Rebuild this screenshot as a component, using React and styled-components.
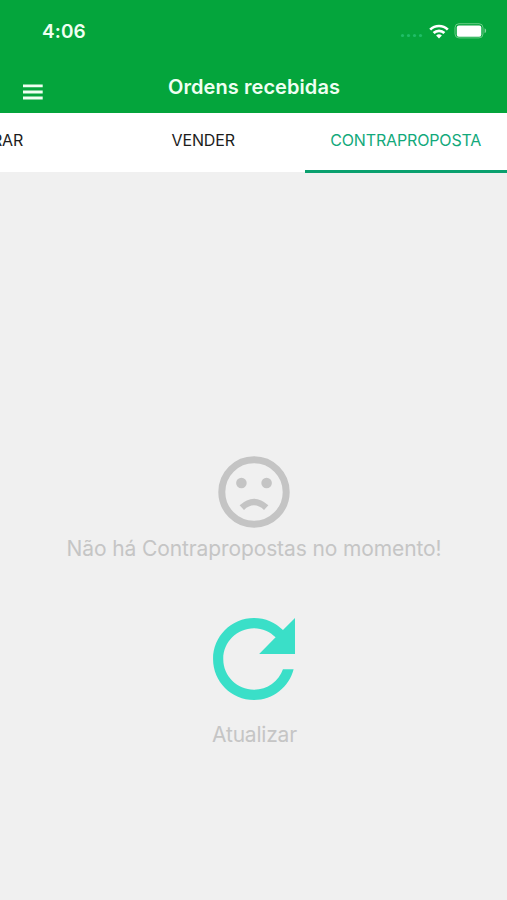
import React, { useState } from "react";
import styled, { createGlobalStyle } from "styled-components";

const GlobalStyle = createGlobalStyle`
  * {
    box-sizing: border-box;
  }
  body {
    margin: 0;
    background: #f0f0f0;
    font-family: Inter, "Liberation Sans", sans-serif;
  }
`;

const Screen = styled.div`
  width: 507px;
  height: 900px;
  display: flex;
  flex-direction: column;
  overflow: hidden;
  background: #f0f0f0;
`;

const Header = styled.header`
  height: 113px;
  flex-shrink: 0;
  background: #04a53c;
  color: #effff2;
`;

const StatusBar = styled.div`
  height: 62px;
  padding: 0 20px 0 42px;
  display: flex;
  align-items: center;
  justify-content: space-between;
`;

const Time = styled.span`
  font-size: 19px;
  font-weight: 600;
  letter-spacing: 0.1px;
`;

const StatusIcons = styled.div`
  display: flex;
  align-items: center;
  gap: 5px;
  svg {
    display: block;
  }
`;

const NavBar = styled.div`
  height: 51px;
  padding: 0 21px 0 22px;
  display: grid;
  grid-template-columns: 22px 1fr 22px;
  align-items: start;
`;

const MenuButton = styled.button`
  margin-top: 22px;
  padding: 0;
  border: none;
  background: none;
  cursor: pointer;
  svg {
    display: block;
  }
`;

const Title = styled.h1`
  margin: 13px 0 0;
  font-size: 20px;
  line-height: 24px;
  font-weight: 600;
  letter-spacing: 0.07px;
  text-align: center;
`;

const Tabs = styled.nav`
  height: 59px;
  flex-shrink: 0;
  display: flex;
  justify-content: flex-end;
  background: #fff;
`;

const Tab = styled.button`
  width: ${props => props.$width || 202.5}px;
  height: 60px;
  flex-shrink: 0;
  padding: 0 0 4px;
  border: none;
  border-bottom: 3px solid ${props => (props.$active ? "#0aa06e" : "transparent")};
  background: none;
  color: ${props => (props.$active ? "#12a97b" : "#1c1c1c")};
  font-family: inherit;
  font-size: 16px;
  letter-spacing: -0.15px;
  cursor: pointer;
`;

const Content = styled.main`
  flex: 1;
  display: flex;
  flex-direction: column;
  align-items: center;
  padding-top: 284px;
  padding-left: 1px;
  color: #c5c5c5;
  svg {
    display: block;
  }
`;

const Message = styled.p`
  margin: 7px 0 0;
  font-size: 21px;
  line-height: 28px;
  letter-spacing: -0.11px;
  white-space: nowrap;
`;

const Refresh = styled.button`
  margin-top: 55px;
  padding: 0 0 0 1px;
  display: flex;
  flex-direction: column;
  align-items: center;
  border: none;
  background: none;
  color: inherit;
  font-family: inherit;
  font-size: 21px;
  line-height: 28px;
  letter-spacing: -0.2px;
  cursor: pointer;
`;

const SignalIcon = () => (
  <svg width="24" height="16" viewBox="0 0 24 16" fill="#20bd68">
    <circle cx="2.5" cy="12.5" r="1.6" />
    <circle cx="8.5" cy="12.5" r="1.6" />
    <circle cx="14.5" cy="12.5" r="1.6" />
    <circle cx="20.5" cy="12.5" r="1.6" />
  </svg>
);

const WifiIcon = () => (
  <svg width="20" height="15" viewBox="0 0 20 15" fill="none" stroke="#fff" strokeWidth="2.7">
    <path d="M1.2 5.6a12.5 12.5 0 0 1 17.6 0" />
    <path d="M4.6 9a7.7 7.7 0 0 1 10.8 0" />
    <path d="M10 14.5 7.1 11.6a4.1 4.1 0 0 1 5.8 0z" fill="#fff" stroke="none" />
  </svg>
);

const BatteryIcon = () => (
  <svg width="33" height="16" viewBox="0 0 33 16">
    <rect x="1" y="0.7" width="28" height="14.2" rx="4" fill="none" stroke="#69cb85" />
    <rect x="2.8" y="2.4" width="24.5" height="11.3" rx="2" fill="#fff" />
    <path d="M30.6 5.3v5c2-.8 2-4.2 0-5z" fill="#86d59c" />
  </svg>
);

const MenuIcon = () => (
  <svg width="21" height="16" viewBox="0 0 21 16" fill="#effff2">
    <path d="M1 .5h19.7v2.8H1zM1 6.6h19.7v2.8H1zM1 12.6h19.7v2.8H1z" />
  </svg>
);

const SadIcon = () => (
  <svg width="72" height="72" viewBox="0 0 72 72" fill="none" stroke="#c4c4c4">
    <circle cx="36" cy="36" r="32.2" strokeWidth="7" />
    <circle cx="23.4" cy="27" r="5.3" fill="#c4c4c4" stroke="none" />
    <circle cx="48.6" cy="27" r="5.3" fill="#c4c4c4" stroke="none" />
    <path d="M23.8 51.6q12.2-11.2 24.4 0" strokeWidth="6.4" />
  </svg>
);

const RefreshIcon = () => (
  <svg width="82" height="82" viewBox="4 4 16 16" fill="#3adfc8">
    <path d="M17.65 6.35C16.2 4.9 14.21 4 12 4c-4.42 0-7.99 3.58-7.99 8s3.57 8 7.99 8c3.73 0 6.84-2.55 7.73-6h-2.08c-.82 2.33-3.04 4-5.65 4-3.31 0-6-2.69-6-6s2.69-6 6-6c1.66 0 3.14.69 4.22 1.78L13 11h7V4l-2.35 2.35z" />
  </svg>
);

const RefreshLabel = styled.span`
  margin-top: 21px;
`;

const tabs = [
  { id: "buy", label: "COMPRAR", width: 237 },
  { id: "sell", label: "VENDER" },
  { id: "counter", label: "CONTRAPROPOSTA" }
];

const App = () => {
  const [current, setCurrent] = useState("counter");
  return (
    <Screen>
      <GlobalStyle />
      <Header>
        <StatusBar>
          <Time>4:06</Time>
          <StatusIcons>
            <SignalIcon />
            <WifiIcon />
            <BatteryIcon />
          </StatusIcons>
        </StatusBar>
        <NavBar>
          <MenuButton aria-label="Menu">
            <MenuIcon />
          </MenuButton>
          <Title>Ordens recebidas</Title>
        </NavBar>
      </Header>
      <Tabs>
        {tabs.map(tab => (
          <Tab
            key={tab.id}
            $width={tab.width}
            $active={tab.id === current}
            onClick={() => setCurrent(tab.id)}
          >
            {tab.label}
          </Tab>
        ))}
      </Tabs>
      <Content>
        <SadIcon />
        <Message>Não há Contrapropostas no momento!</Message>
        <Refresh>
          <RefreshIcon />
          <RefreshLabel>Atualizar</RefreshLabel>
        </Refresh>
      </Content>
    </Screen>
  );
};

export default App;
